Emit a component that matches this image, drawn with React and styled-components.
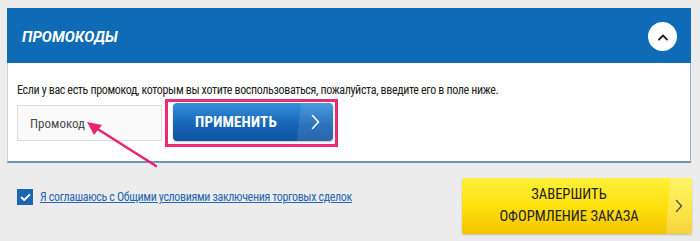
import React from "react";
import styled, { createGlobalStyle } from "styled-components";

const Global = createGlobalStyle`
  html, body { margin: 0; padding: 0; background: #ececec; }
  body { font-family: Roboto, "Liberation Sans", sans-serif; }
`;

const COND = `"Liberation Sans Narrow", "Roboto Condensed", "DejaVu Sans Condensed", Roboto, sans-serif`;

const Page = styled.div`
  position: relative;
  padding: 8px 8px 0 7px;
  height: 241px;
  box-sizing: border-box;
`;

const Panel = styled.section`
  width: 684px;
  background: #fff;
  border-left: 1px solid #c9d2dc;
  border-right: 1px solid #9db3c9;
  border-bottom: 2px solid #6f93b9;
  box-sizing: border-box;
`;

const Header = styled.div`
  height: 55px;
  background: #0f6bb5;
  display: flex;
  align-items: center;
  justify-content: space-between;
  padding: 0 14px 0 15px;
  margin-left: -1px;
  margin-right: -1px;
`;

const Title = styled.h2`
  margin: 2px 0 0;
  color: #fff;
  font-family: Roboto, sans-serif;
  font-weight: 700;
  font-style: italic;
  font-size: 15px;
  letter-spacing: 0.1px;
`;

const Toggle = styled.button`
  width: 29px;
  height: 29px;
  border-radius: 50%;
  border: none;
  background: #fff;
  display: flex;
  align-items: center;
  justify-content: center;
  padding: 0;
  margin-top: 2px;
`;

const Body = styled.div`
  padding: 20px 9px 14px 9px;
`;

const Intro = styled.p`
  margin: 0 0 2px;
  font-family: ${COND};
  font-size: 12px;
  letter-spacing: -0.35px;
  color: #222;
  line-height: 14px;
`;

const Row = styled.div`
  display: flex;
  align-items: center;
  gap: 3px;
`;

const Input = styled.input`
  width: 145px;
  height: 36px;
  box-sizing: border-box;
  border: 1px solid #dcdcdc;
  background: #fafafa;
  padding: 0 12px;
  font-family: ${COND};
  font-size: 13px;
  color: #444;
  outline: none;
  &::placeholder { color: #4a4a4a; }
`;

const Highlight = styled.div`
  border: 3px solid #ea2c74;
  padding: 1px 2px 3px 5px;
  display: flex;
`;

const ApplyButton = styled.button`
  position: relative;
  width: 160px;
  height: 38px;
  border: none;
  border-radius: 4px;
  background: linear-gradient(#3590dc, #1562b4 60%, #0f55a3);
  box-shadow: 0 1px 2px rgba(0,0,0,0.25);
  color: #fff;
  font-family: ${COND};
  font-weight: 700;
  font-size: 15px;
  display: flex;
  align-items: center;
  padding: 0;
  overflow: hidden;
  &::after {
    content: "";
    position: absolute;
    top: 0; bottom: 0; right: 0;
    width: 36px;
    background: rgba(255,255,255,0.1);
    clip-path: polygon(4px 0, 100% 0, 100% 100%, 0 100%);
  }
`;

const ButtonLabel = styled.span`
  flex: 1;
  text-align: center;
  padding-left: 2px;
  letter-spacing: 0.2px;
`;

const ButtonArrow = styled.span`
  width: 36px;
  display: flex;
  align-items: center;
  justify-content: center;
`;

const Footer = styled.div`
  display: flex;
  justify-content: space-between;
  align-items: flex-start;
  padding: 15px 0 0 10px;
  width: 685px;
  box-sizing: border-box;
`;

const Agree = styled.label`
  display: flex;
  align-items: center;
  gap: 7px;
  margin-top: 11px;
`;

const Check = styled.span`
  width: 16px;
  height: 16px;
  background: #1a66b3;
  display: flex;
  align-items: center;
  justify-content: center;
`;

const AgreeLink = styled.a`
  font-family: ${COND};
  font-size: 12px;
  letter-spacing: -0.35px;
  color: #2468b2;
  text-decoration: underline;
`;

const FinishButton = styled.button`
  position: relative;
  width: 230px;
  height: 56px;
  border: none;
  border-radius: 2px;
  background: linear-gradient(#fff03a, #ffe10d 50%, #f2c400);
  box-shadow: 0 1px 2px rgba(0,0,0,0.2);
  display: flex;
  align-items: center;
  padding: 0;
  font-family: ${COND};
  font-size: 14.5px;
  color: #222;
  line-height: 22px;
  overflow: hidden;
  &::after {
    content: "";
    position: absolute;
    top: 0; bottom: 0; right: 0;
    width: 26px;
    background: rgba(255,255,255,0.25);
    clip-path: polygon(4px 0, 100% 0, 100% 100%, 0 100%);
  }
`;

const FinishLabel = styled.span`
  flex: 1;
  text-align: center;
  padding-left: 10px;
`;

const FinishArrow = styled.span`
  width: 26px;
  display: flex;
  justify-content: center;
`;

const Pointer = styled.svg`
  position: absolute;
  left: 80px;
  top: 116px;
`;

export default function App() {
  return (
    <>
      <Global />
      <Page>
        <Panel>
          <Header>
            <Title>ПРОМОКОДЫ</Title>
            <Toggle aria-label="Свернуть">
              <svg width="12" height="8" viewBox="0 0 12 8">
                <path d="M2 6.5 L6 2.5 L10 6.5" fill="none" stroke="#222" strokeWidth="1.8" strokeLinecap="round" strokeLinejoin="round" />
              </svg>
            </Toggle>
          </Header>
          <Body>
            <Intro>Если у вас есть промокод, которым вы хотите воспользоваться, пожалуйста, введите его в поле ниже.</Intro>
            <Row>
              <Input placeholder="Промокод" />
              <Highlight>
                <ApplyButton>
                  <ButtonLabel>ПРИМЕНИТЬ</ButtonLabel>
                  <ButtonArrow>
                    <svg width="9" height="16" viewBox="0 0 9 16">
                      <path d="M1.5 1.5 L7.5 8 L1.5 14.5" fill="none" stroke="#fff" strokeWidth="1.6" strokeLinecap="round" strokeLinejoin="round" />
                    </svg>
                  </ButtonArrow>
                </ApplyButton>
              </Highlight>
            </Row>
          </Body>
        </Panel>
        <Footer>
          <Agree>
            <Check>
              <svg width="11" height="9" viewBox="0 0 11 9">
                <path d="M1.5 4.5 L4.2 7 L9.5 1.8" fill="none" stroke="#fff" strokeWidth="1.8" strokeLinecap="round" strokeLinejoin="round" />
              </svg>
            </Check>
            <AgreeLink href="#">Я соглашаюсь с Общими условиями заключения торговых сделок</AgreeLink>
          </Agree>
          <FinishButton>
            <FinishLabel>ЗАВЕРШИТЬ<br />ОФОРМЛЕНИЕ ЗАКАЗА</FinishLabel>
            <FinishArrow>
              <svg width="8" height="14" viewBox="0 0 8 14">
                <path d="M1.5 1.5 L6.5 7 L1.5 12.5" fill="none" stroke="#222" strokeWidth="1.5" strokeLinecap="round" strokeLinejoin="round" />
              </svg>
            </FinishArrow>
          </FinishButton>
        </Footer>
        <Pointer width="80" height="54" viewBox="0 0 80 54">
          <line x1="76" y1="50" x2="16" y2="12" stroke="#e8246f" strokeWidth="2.5" strokeLinecap="round" />
          <polygon points="7,6 22,9 14,19" fill="#e8246f" />
        </Pointer>
      </Page>
    </>
  );
}
